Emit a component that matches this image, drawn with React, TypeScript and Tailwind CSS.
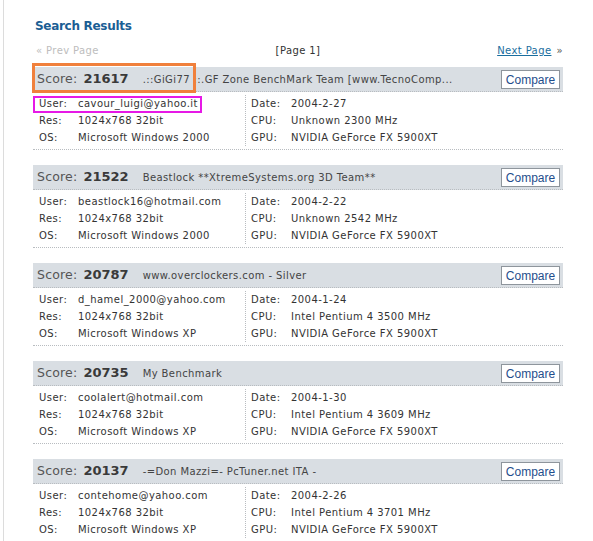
import React from "react";

type Result = {
  score: string;
  title: string;
  user: string;
  res: string;
  os: string;
  date: string;
  cpu: string;
  gpu: string;
};

const results: Result[] = [
  {
    score: "21617",
    title: ".::GiGi77 ::.GF Zone BenchMark Team [www.TecnoComp...",
    user: "cavour_luigi@yahoo.it",
    res: "1024x768 32bit",
    os: "Microsoft Windows 2000",
    date: "2004-2-27",
    cpu: "Unknown 2300 MHz",
    gpu: "NVIDIA GeForce FX 5900XT",
  },
  {
    score: "21522",
    title: "Beastlock **XtremeSystems.org 3D Team**",
    user: "beastlock16@hotmail.com",
    res: "1024x768 32bit",
    os: "Microsoft Windows 2000",
    date: "2004-2-22",
    cpu: "Unknown 2542 MHz",
    gpu: "NVIDIA GeForce FX 5900XT",
  },
  {
    score: "20787",
    title: "www.overclockers.com - Silver",
    user: "d_hamel_2000@yahoo.com",
    res: "1024x768 32bit",
    os: "Microsoft Windows XP",
    date: "2004-1-24",
    cpu: "Intel Pentium 4 3500 MHz",
    gpu: "NVIDIA GeForce FX 5900XT",
  },
  {
    score: "20735",
    title: "My Benchmark",
    user: "coolalert@hotmail.com",
    res: "1024x768 32bit",
    os: "Microsoft Windows XP",
    date: "2004-1-30",
    cpu: "Intel Pentium 4 3609 MHz",
    gpu: "NVIDIA GeForce FX 5900XT",
  },
  {
    score: "20137",
    title: "-=Don Mazzi=- PcTuner.net ITA -",
    user: "contehome@yahoo.com",
    res: "1024x768 32bit",
    os: "Microsoft Windows XP",
    date: "2004-2-26",
    cpu: "Intel Pentium 4 3701 MHz",
    gpu: "NVIDIA GeForce FX 5900XT",
  },
];

function Row({ label, value, labelWidth }: { label: string; value: string; labelWidth: string }) {
  return (
    <div className="flex h-[17px] items-center">
      <span className={labelWidth}>{label}</span>
      <span className="whitespace-nowrap">{value}</span>
    </div>
  );
}

function ResultCard({ r }: { r: Result }) {
  return (
    <div className="mb-[15px]">
      {/* Header */}
      <div className="flex h-[25px] items-center justify-between border-b border-dotted border-[#b8bcc0] bg-[#d9dee3] pl-[4px] pr-[3px]">
        <div className="flex items-baseline whitespace-nowrap text-[#444]">
          <span className="text-[12.5px] tracking-[0.2px] text-[#555]">Score:</span>
          <span className="ml-[6px] text-[13px] font-bold text-[#3a3a3a]">{r.score}</span>
          <span className="ml-[14px] text-[10px] tracking-[0.4px] text-[#444]">{r.title}</span>
        </div>
        <button className="h-[19px] w-[59px] border border-[#8e959c] bg-white font-['Liberation_Sans',Arial,sans-serif] text-[12px] text-[#1f4e8c]">
          Compare
        </button>
      </div>
      {/* Body */}
      <div className="flex border-b border-dotted border-[#b8bcc0] pb-[3px] pt-[3px] text-[10px] tracking-[0.45px] text-[#333]">
        <div className="w-[213px] border-r border-dotted border-[#b8bcc0] pl-[6px]">
          <Row label="User:" value={r.user} labelWidth="w-[39px]" />
          <Row label="Res:" value={r.res} labelWidth="w-[39px]" />
          <Row label="OS:" value={r.os} labelWidth="w-[39px]" />
        </div>
        <div className="pl-[5px]">
          <Row label="Date:" value={r.date} labelWidth="w-[40px]" />
          <Row label="CPU:" value={r.cpu} labelWidth="w-[40px]" />
          <Row label="GPU:" value={r.gpu} labelWidth="w-[40px]" />
        </div>
      </div>
    </div>
  );
}

export default function App() {
  return (
    <div className="relative h-[541px] w-[593px] overflow-hidden bg-white font-['DejaVu_Sans',Verdana,sans-serif]">
      <div className="ml-[3px] h-[541px] border-l border-[#dcdcdc] pl-[29px] pr-[30px] pt-[17px]">
        {/* Title */}
        <h1 className="pl-[2px] text-[12px] font-bold leading-[18px] tracking-[-0.3px] text-[#1b5e94]">
          Search Results
        </h1>

        {/* Pagination */}
        <div className="mt-[8px] flex h-[14px] items-center justify-between text-[10px] tracking-[0.4px]">
          <span className="w-[120px] pl-[3px] text-[#bdbdbd]">« Prev Page</span>
          <span className="text-[#333]">[Page 1]</span>
          <span className="w-[120px] text-right">
            <span className="text-[#1a6e9e] underline">Next Page</span>
            <span className="ml-[5px] text-[#555]">»</span>
          </span>
        </div>

        {/* Results */}
        <div className="mt-[10px]">
          {results.map((r) => (
            <ResultCard key={r.score} r={r} />
          ))}
        </div>
      </div>

      {/* Annotation boxes */}
      <div className="pointer-events-none absolute left-[32px] top-[63px] h-[30px] w-[164px] border-[3px] border-[#f0803c]" />
      <div className="pointer-events-none absolute left-[33px] top-[96px] h-[17px] w-[169px] border-2 border-[#e619e6]" />
    </div>
  );
}
